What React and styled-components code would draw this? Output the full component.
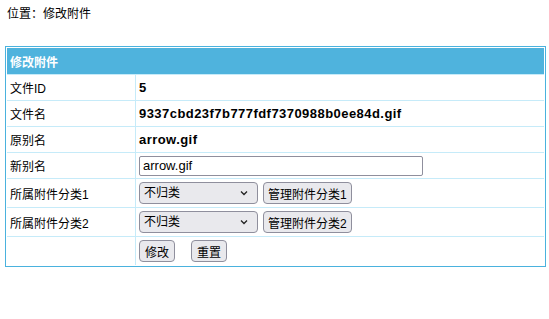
import styled, { createGlobalStyle } from "styled-components";

const Global = createGlobalStyle`
  body {
    margin: 0;
    background: #fff;
    font-family: "Liberation Sans", "Noto Sans CJK SC", sans-serif;
    font-size: 12px;
    color: #000;
  }
`;

const Page = styled.div`
  padding: 5px;
`;

const Crumb = styled.div`
  padding: 1px 2px;
  line-height: 16px;
  margin-bottom: 23px;
`;

const Box = styled.div`
  width: 537px;
  border: 1px solid #4ab2de;
  padding: 1px;
  background: #fff;
`;

const Table = styled.table`
  width: 100%;
  border-collapse: collapse;
`;

const Head = styled.th`
  background: #4fb3dd;
  color: #fff;
  font-weight: bold;
  text-align: left;
  height: 26px;
  padding: 0 3px;
  border-bottom: 1px solid #c6ebf9;
`;

const Label = styled.td`
  width: 122px;
  padding: 0 3px;
  height: ${(p) => p.$h || 25}px;
  border-right: 1px solid #c6ebf9;
  border-bottom: ${(p) => (p.$last ? "none" : "1px solid #c6ebf9")};
`;

const Value = styled.td`
  padding: 0 3px;
  border-bottom: ${(p) => (p.$last ? "none" : "1px solid #c6ebf9")};
  font-weight: ${(p) => (p.$bold ? "bold" : "normal")};
  font-size: ${(p) => (p.$bold ? "13px" : "12px")};
  letter-spacing: ${(p) => (p.$bold ? "0.45px" : "normal")};
`;

const Input = styled.input`
  width: 284px;
  height: 20px;
  box-sizing: border-box;
  border: 1px solid #8f8f9d;
  border-radius: 2px;
  padding: 0 3px;
  font: 13px "Liberation Sans", "Noto Sans CJK SC", sans-serif;
  vertical-align: middle;
`;

const Inline = styled.div`
  display: flex;
  align-items: center;
  gap: ${(p) => p.$gap || 5}px;
`;

const SelectWrap = styled.div`
  position: relative;
  width: 119px;
  height: 22px;
`;

const Select = styled.select`
  appearance: none;
  width: 100%;
  height: 100%;
  box-sizing: border-box;
  background: #e9e9ed;
  border: 1px solid #8f8f9d;
  border-radius: 4px;
  padding: 0 4px;
  font: 12px "Liberation Sans", "Noto Sans CJK SC", sans-serif;
  color: #000;
`;

const Chevron = styled.svg`
  position: absolute;
  right: 10px;
  top: 8px;
  pointer-events: none;
`;

const Button = styled.button`
  height: 22px;
  box-sizing: border-box;
  background: #e9e9ed;
  border: 1px solid #8f8f9d;
  border-radius: 4px;
  padding: 0 ${(p) => p.$pad || 4}px;
  font: 12px "Liberation Sans", "Noto Sans CJK SC", sans-serif;
  color: #000;
`;

const CategorySelect = () => (
  <SelectWrap>
    <Select defaultValue="0">
      <option value="0">不归类</option>
    </Select>
    <Chevron width="8" height="6" viewBox="0 0 8 6">
      <path d="M1 1.5 L4 4.5 L7 1.5" fill="none" stroke="#222" strokeWidth="1.3" />
    </Chevron>
  </SelectWrap>
);

export default function App() {
  return (
    <Page>
      <Global />
      <Crumb>位置：修改附件</Crumb>
      <Box>
        <Table>
          <tbody>
            <tr>
              <Head colSpan={2}>修改附件</Head>
            </tr>
            <tr>
              <Label>文件ID</Label>
              <Value $bold>5</Value>
            </tr>
            <tr>
              <Label>文件名</Label>
              <Value $bold>9337cbd23f7b777fdf7370988b0ee84d.gif</Value>
            </tr>
            <tr>
              <Label>原别名</Label>
              <Value $bold>arrow.gif</Value>
            </tr>
            <tr>
              <Label>新别名</Label>
              <Value>
                <Input defaultValue="arrow.gif" />
              </Value>
            </tr>
            <tr>
              <Label $h={28}>所属附件分类1</Label>
              <Value>
                <Inline>
                  <CategorySelect />
                  <Button>管理附件分类1</Button>
                </Inline>
              </Value>
            </tr>
            <tr>
              <Label $h={28}>所属附件分类2</Label>
              <Value>
                <Inline>
                  <CategorySelect />
                  <Button>管理附件分类2</Button>
                </Inline>
              </Value>
            </tr>
            <tr>
              <Label $h={28} $last />
              <Value $last>
                <Inline $gap={16}>
                  <Button $pad={5}>修改</Button>
                  <Button $pad={5}>重置</Button>
                </Inline>
              </Value>
            </tr>
          </tbody>
        </Table>
      </Box>
    </Page>
  );
}
